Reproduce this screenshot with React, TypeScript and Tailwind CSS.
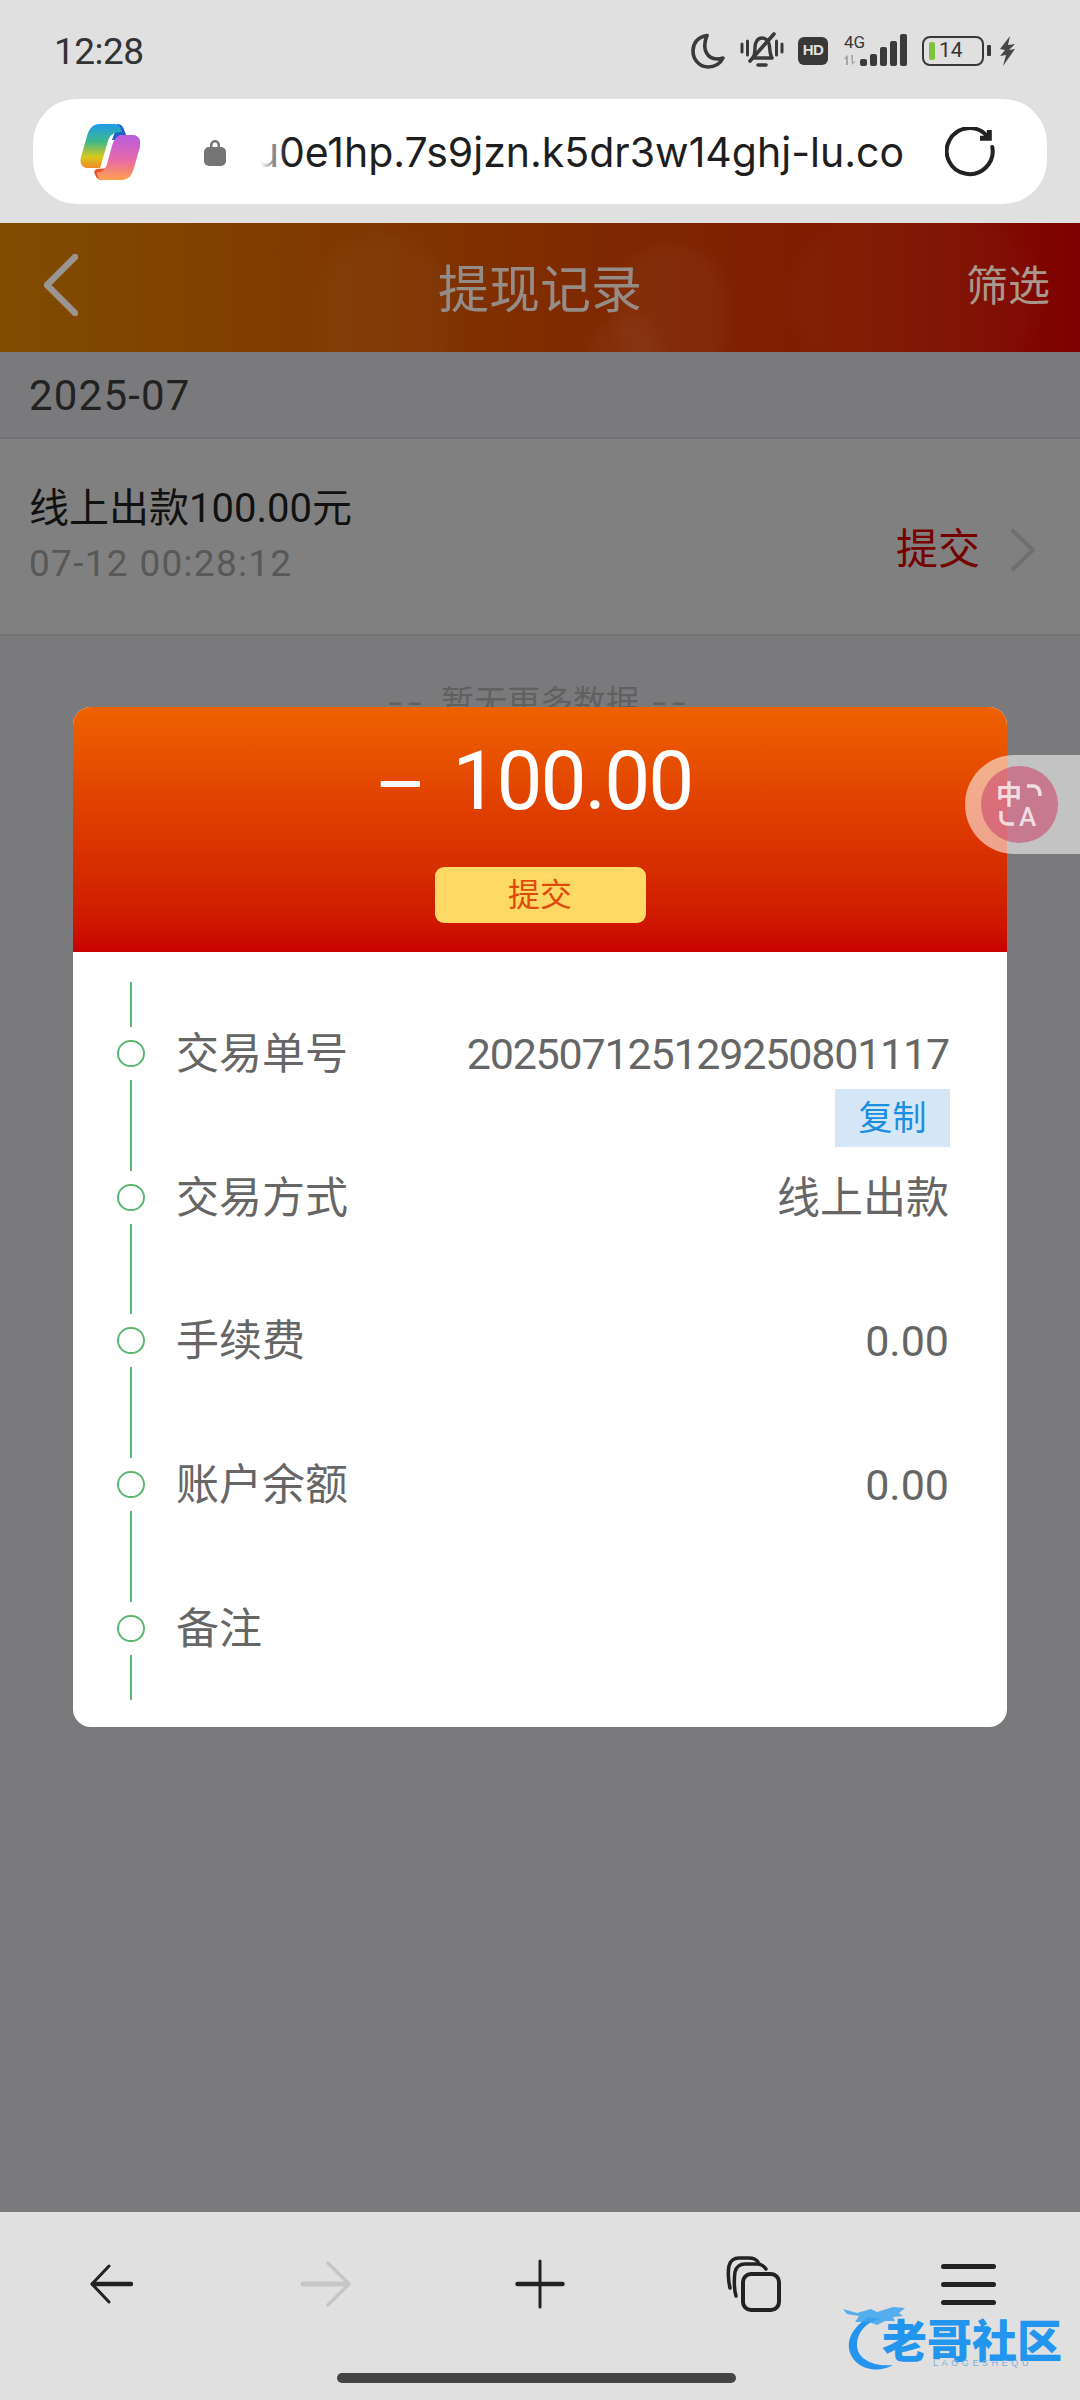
import React from 'react';

const FONT = "font-['Roboto','Noto_Sans_CJK_SC',sans-serif]";

const details = [
  { label: '交易单号', value: '202507125129250801117' },
  { label: '交易方式', value: '线上出款' },
  { label: '手续费', value: '0.00' },
  { label: '账户余额', value: '0.00' },
  { label: '备注', value: '' },
];

function StatusIcons() {
  return (
    <div className="flex items-center">
      {/* moon */}
      <svg width="34" height="36" viewBox="0 0 34 36" fill="none" stroke="#3a3a3a" strokeWidth="3.6">
        <path d="M16 2.500C6 4 2 11 2 18c0 9 7 16 15 16 6.500 0 12-3 15-9-2 .8-4 1-6 1-9 0-16-9-10-23.500z" strokeLinejoin="round" />
      </svg>
      {/* muted bell */}
      <svg className="ml-[15px]" width="44" height="37" viewBox="0 0 44 37" fill="none" stroke="#3a3a3a">
        <path d="M2 12v8M7.500 9v14M36.500 9v14M42 12v8" strokeWidth="3" strokeLinecap="round" />
        <path d="M13 26c2-3 2-6 2-11 0-5 3-9 7-9 4 0 7 3 7.500 8 .4 5 .5 9 2.500 12H13z" strokeWidth="3.400" strokeLinejoin="round" />
        <path d="M18 33h8" strokeWidth="3.600" strokeLinecap="round" />
        <path d="M34 2 10 29" strokeWidth="3.600" strokeLinecap="round" />
      </svg>
      {/* HD */}
      <div className="ml-[14px] flex h-[28px] w-[30px] items-center justify-center rounded-[6px] bg-[#383838] font-['Liberation_Sans',sans-serif] text-[15px] font-bold tracking-[-0.5px] text-[#e0e0e0]">
        HD
      </div>
      {/* 4G and signal */}
      <div className="relative ml-[14px] h-[34px] w-[66px]">
        <span className="absolute left-[2px] top-[-2px] font-['Roboto',sans-serif] text-[17px] leading-[20px] text-[#3a3a3a]">4G</span>
        <svg className="absolute left-0 top-0" width="66" height="34" viewBox="0 0 66 34">
          <path d="M2 24l4-3v10H4v-5zM9 21h2v7l3-1-4 4z" fill="#a8a8a8" />
          <rect x="18" y="25" width="7" height="7" rx="2" fill="#3a3a3a" />
          <rect x="28" y="20" width="7" height="12" rx="2" fill="#3a3a3a" />
          <rect x="38" y="13" width="7" height="19" rx="2" fill="#3a3a3a" />
          <rect x="48" y="7" width="7" height="25" rx="2" fill="#3a3a3a" />
          <rect x="58" y="0" width="7" height="32" rx="2" fill="#3a3a3a" />
        </svg>
      </div>
      {/* battery */}
      <div className="ml-[14px] flex items-center">
        <div className="flex h-[30px] w-[62px] items-center rounded-[8px] border-[2.5px] border-[#383838] pl-[5px]">
          <div className="h-[18px] w-[6px] rounded-[2px] bg-[#7cc53a]" />
          <span className="ml-[4px] font-['Roboto',sans-serif] text-[21px] leading-none text-[#333]">14</span>
        </div>
        <div className="ml-[3px] h-[11px] w-[4px] rounded-[1px] bg-[#383838]" />
      </div>
      {/* charging bolt */}
      <svg className="ml-[8px]" width="17" height="30" viewBox="0 0 17 30" fill="#484848">
        <path d="M11 0 1 13l5 1-5 6 6-1-3 11 12-17-6 1 6-6-7 1z" />
      </svg>
    </div>
  );
}

function CopilotLogo() {
  return (
    <svg width="60" height="58" viewBox="0 0 60 58">
      <defs>
        <linearGradient id="cpA" x1="0.4" y1="0" x2="0.4" y2="1">
          <stop offset="0" stopColor="#1f9be8" />
          <stop offset="0.4" stopColor="#3fb88a" />
          <stop offset="0.75" stopColor="#d8c81a" />
          <stop offset="1" stopColor="#f08a2a" />
        </linearGradient>
        <linearGradient id="cpB" x1="0.5" y1="0" x2="0.5" y2="1">
          <stop offset="0" stopColor="#b65be0" />
          <stop offset="0.55" stopColor="#e86aa8" />
          <stop offset="1" stopColor="#ffa04e" />
        </linearGradient>
      </defs>
      <path d="M37 1c4 0 6 2 8 8l3 8H32l3-8z" fill="#1b5fc9" />
      <path d="M16 46l-2 3c2 6 4 8 8 8 4 0 6-3 7-6l2-6z" fill="#e8522a" />
      <path d="M42 9c-1-5-3-8-7-8H20C12 1 9 6 7 13L1 34c-2 7 2 11 7 11h12c1-3 2-6 3-10l5-17c1-4 4-9 14-9z" fill="url(#cpA)" />
      <path d="M17 49c5 1 8-2 10-8l5-18c1-3 2-8 8-11h13c5 0 9 5 7 12l-6 21c-2 7-5 12-13 12H22c-3 0-5-3-5-8z" fill="url(#cpB)" />
    </svg>
  );
}

function UrlBar() {
  return (
    <div className="mx-[33px] mt-[29px] flex h-[105px] items-center rounded-[44px] bg-white pl-[47px] pr-[52px]">
      <CopilotLogo />
      <svg className="ml-[64px]" width="22" height="28" viewBox="0 0 22 28" fill="#757575">
        <path d="M6 10V7a5 5 0 0 1 10 0v3h-2.500V7a2.500 2.500 0 0 0-5 0v3z" />
        <rect x="0" y="9" width="22" height="19" rx="5" />
      </svg>
      <div className="relative ml-[24px] flex w-[654px] justify-end overflow-hidden">
        <span className="whitespace-nowrap font-['Inter',sans-serif] text-[41px] leading-[60px] text-[#1e1e1e]">u0e1hp.7s9jzn.k5dr3w14ghj-lu.co</span>
        <div className="absolute inset-y-0 left-0 w-[36px] bg-linear-to-r from-white from-30% to-transparent" />
      </div>
      <svg className="ml-auto" width="50" height="50" viewBox="0 0 50 50" fill="none" stroke="#222" strokeWidth="4" strokeLinecap="round" strokeLinejoin="round">
        <path d="M47.300 20A23 23 0 1 1 42 9" />
        <path d="M44.300 3v8.300H35" strokeWidth="5" strokeLinecap="butt" strokeLinejoin="miter" />
      </svg>
    </div>
  );
}

function PageHeader() {
  return (
    <div className="relative flex h-[129px] items-center justify-between overflow-hidden bg-linear-to-r from-[#804c00] via-[#7f2c00] via-50% to-[#7f0000] pl-[44px] pr-[30px]">
      <div className="absolute left-[316px] top-[12px] h-[170px] w-[134px] rounded-full bg-white/[0.025] blur-sm" />
      <div className="absolute left-[617px] top-[22px] h-[140px] w-[108px] rounded-full bg-white/[0.035] blur-sm" />
      <div className="absolute left-[590px] top-[90px] h-[80px] w-[72px] rounded-full bg-white/[0.03] blur-sm" />
      <div className="absolute left-[790px] top-[-10px] h-[170px] w-[250px] rounded-[90px] bg-white/[0.02] blur-sm" />
      <svg className="relative mt-[-5px]" width="34" height="62" viewBox="0 0 34 62" fill="none" stroke="#9a9590" strokeWidth="6.500" strokeLinecap="round" strokeLinejoin="round">
        <path d="M31 3 3 31l28 28" />
      </svg>
      <span className="absolute left-0 right-0 top-[42px] text-center text-[51px] leading-none text-[#968c87]">提现记录</span>
      <span className="relative mt-[-1px] text-[42px] leading-none text-[#a8998f]">筛选</span>
    </div>
  );
}

function RecordList() {
  return (
    <div>
      <div className="flex h-[87px] items-center border-b-2 border-[#727274] pl-[29px] pr-[30px] pt-[2px] text-[42px] tracking-[1.2px] text-[#222]">2025-07</div>
      <div className="flex h-[197px] items-center justify-between border-b-2 border-[#727274] bg-[#808080] pl-[29px] pr-[44px]">
        <div className="mt-[-2px]">
          <div className="text-[40px] leading-[50px] text-[#111]">线上出款100.00元</div>
          <div className="mt-[6px] text-[37px] leading-[48px] tracking-[1.3px] text-[#585858]">07-12 00:28:12</div>
        </div>
        <div className="mt-[26px] flex items-center">
          <span className="text-[42px] leading-none text-[#760000]">提交</span>
          <svg className="ml-[30px]" width="26" height="42" viewBox="0 0 26 42" fill="none" stroke="#6f6f6f" strokeWidth="4" strokeLinecap="round" strokeLinejoin="round">
            <path d="M3 2 23 21 3 40" />
          </svg>
        </div>
      </div>
      <div className="mt-[43px] flex justify-center text-[33px] leading-[48px] text-[#606060]">
        <span className="mr-[20px] inline-block scale-x-150 tracking-[4px]">--</span>
        <span>暂无更多数据</span>
        <span className="ml-[20px] inline-block scale-x-150 tracking-[4px]">--</span>
      </div>
    </div>
  );
}

function TranslateBubble() {
  return (
    <div className="absolute right-0 top-[532px] flex h-[99px] w-[115px] items-center rounded-l-[50px] bg-white/55 pl-[16px]">
      <div className="relative h-[77px] w-[77px] rounded-full bg-[#c8486c]/60 text-white/75">
        <span className="absolute left-[15px] top-[14px] font-['Noto_Sans_CJK_SC',sans-serif] text-[26px] font-bold leading-none">中</span>
        <span className="absolute left-[38px] top-[38px] font-['Roboto',sans-serif] text-[26px] font-medium leading-none">A</span>
        <svg className="absolute inset-0" width="77" height="77" viewBox="0 0 77 77" fill="none" stroke="currentColor" strokeWidth="3.500">
          <path d="M46 20h6c4 0 7 3 7 10" />
          <path d="M20 45v7c0 4 3 6 7 6h6" />
        </svg>
      </div>
    </div>
  );
}

function DetailModal() {
  return (
    <div className="absolute left-[73px] top-[484px] w-[934px] overflow-hidden rounded-[18px] bg-white">
      <div className="flex h-[245px] flex-col items-center bg-linear-to-b from-[#ee6100] via-[#e04000] via-40% to-[#c90000]">
        <div className="mt-[29px] flex h-[90px] items-center text-[82px] leading-none tracking-[-2px] text-white">
          <span className="inline-block scale-x-200">-</span>
          <span className="ml-[44px]">100.00</span>
        </div>
        <div className="mt-[41px] flex h-[56px] w-[211px] items-center justify-center rounded-[9px] bg-[#ffd966] text-[32px] text-[#dd4c0c]">提交</div>
      </div>
      <div className="pb-[27px] pl-[44px] pr-[58px] pt-[30px]">
        {details.map((row, i) => (
          <div key={i} className="relative flex h-[143.6px] items-center">
            <div className="flex h-full w-[28px] flex-col items-center">
              <div className="w-[2px] flex-1 bg-[#5cb870]" />
              <div className="my-[13px] h-[27px] w-[28px] rounded-full border-2 border-[#5cb870]" />
              <div className="w-[2px] flex-1 bg-[#5cb870]" />
            </div>
            <span className="ml-[31px] mt-[2px] text-[43px] leading-none text-[#666]">{row.label}</span>
            <span className={i === 0 ? 'ml-auto mt-[2px] text-[43px] leading-none tracking-[-1.2px] text-[#666]' : 'ml-auto mt-[2px] text-[43px] leading-none text-[#666]'}>{row.value}</span>
            {i === 0 && (
              <div className="absolute right-[-1px] top-[107px] flex h-[58px] w-[115px] items-center justify-center bg-[#d5e6f7] text-[34px] leading-none text-[#1a8fe0]">复制</div>
            )}
          </div>
        ))}
      </div>
    </div>
  );
}

function BottomBar() {
  return (
    <div className="relative h-[188px] bg-[#e0e0e0]">
      <div className="grid grid-cols-5 px-[4px] pt-[44px]">
        <div className="flex h-[56px] items-center justify-center">
          <svg width="44" height="40" viewBox="0 0 44 40" fill="none" stroke="#222" strokeLinecap="round" strokeLinejoin="round">
            <path d="M20 2 3 20l17 18" strokeWidth="3" />
            <path d="M4 20h38" strokeWidth="4.500" />
          </svg>
        </div>
        <div className="flex h-[56px] items-center justify-center">
          <svg width="52" height="46" viewBox="0 0 52 46" fill="none" stroke="#c6c6c6" strokeLinecap="round" strokeLinejoin="round">
            <path d="M28 2 49 23 28 44" strokeWidth="3.500" />
            <path d="M3 23h44" strokeWidth="5" />
          </svg>
        </div>
        <div className="flex h-[56px] items-center justify-center">
          <svg width="50" height="50" viewBox="0 0 50 50" fill="none" stroke="#222" strokeLinecap="round">
            <path d="M25 2v46" strokeWidth="3" />
            <path d="M2.500 25h45" strokeWidth="4.500" />
          </svg>
        </div>
        <div className="flex h-[56px] items-center justify-center">
          <svg width="56" height="56" viewBox="0 0 56 56" fill="none" stroke="#222" strokeWidth="3.500" strokeLinecap="round">
            <rect x="17" y="18" width="36" height="36" rx="8" strokeWidth="4" />
            <path d="M10 40C8 34 8 22 9 16c1-5 5-8 10-8h12c4 0 7 2 9 5" />
            <path d="M4 32C2 24 2 14 3 10c1-5 5-8 10-8h10c4 0 7 1 9 4" />
          </svg>
        </div>
        <div className="flex h-[56px] flex-col items-center justify-center gap-[13px]">
          <div className="h-[5px] w-[55px] rounded-full bg-[#222]" />
          <div className="h-[5px] w-[55px] rounded-full bg-[#222]" />
          <div className="h-[5px] w-[55px] rounded-full bg-[#222]" />
        </div>
      </div>
      <div className="absolute bottom-[17px] left-[337px] h-[10px] w-[399px] rounded-full bg-[#444]" />
      {/* site watermark */}
      <div className="absolute bottom-[27px] right-[17px] h-[68px] w-[220px]">
        <svg className="absolute left-0 top-0" width="100" height="68" viewBox="0 0 100 68" fill="none">
          <path d="M26 12C6 24 0 42 12 56c10 10 26 11 38 4C30 62 14 54 14 40 14 28 22 18 36 14z" fill="#2494ee" />
          <path d="M0 4l14 4 14-4 6 3 16-5 12 1-6 5 4 3-10 1 2 4-10 0-8 4-8-3-14 0 4-6-12-2z" fill="#3ba4f0" opacity="0.85" />
        </svg>
        <span className="absolute left-[39px] top-[16px] whitespace-nowrap font-['Noto_Sans_CJK_SC',sans-serif] text-[45px] font-black leading-[36px] text-[#2295ee]">老哥社区</span>
        <span className="absolute left-[90px] top-[52px] whitespace-nowrap font-['Liberation_Sans',sans-serif] text-[9px] leading-[12px] tracking-[3.600px] text-[#7aaedc]">LAOGESHEQU</span>
      </div>
    </div>
  );
}

export default function App() {
  return (
    <div className={`flex h-[2400px] w-[1080px] flex-col overflow-hidden bg-[#e0e0e0] ${FONT}`}>
      <div className="h-[223px]">
        <div className="flex h-[70px] items-end justify-between pl-[54px] pr-[64px]">
          <span className="mb-[-8px] text-[37px] leading-[52px] tracking-[-0.5px] text-[#333]">12:28</span>
          <div className="pb-[1px]"><StatusIcons /></div>
        </div>
        <UrlBar />
      </div>
      <div className="relative flex-1 bg-[#7a7a7c]">
        <PageHeader />
        <RecordList />
        <DetailModal />
        <TranslateBubble />
      </div>
      <BottomBar />
    </div>
  );
}
